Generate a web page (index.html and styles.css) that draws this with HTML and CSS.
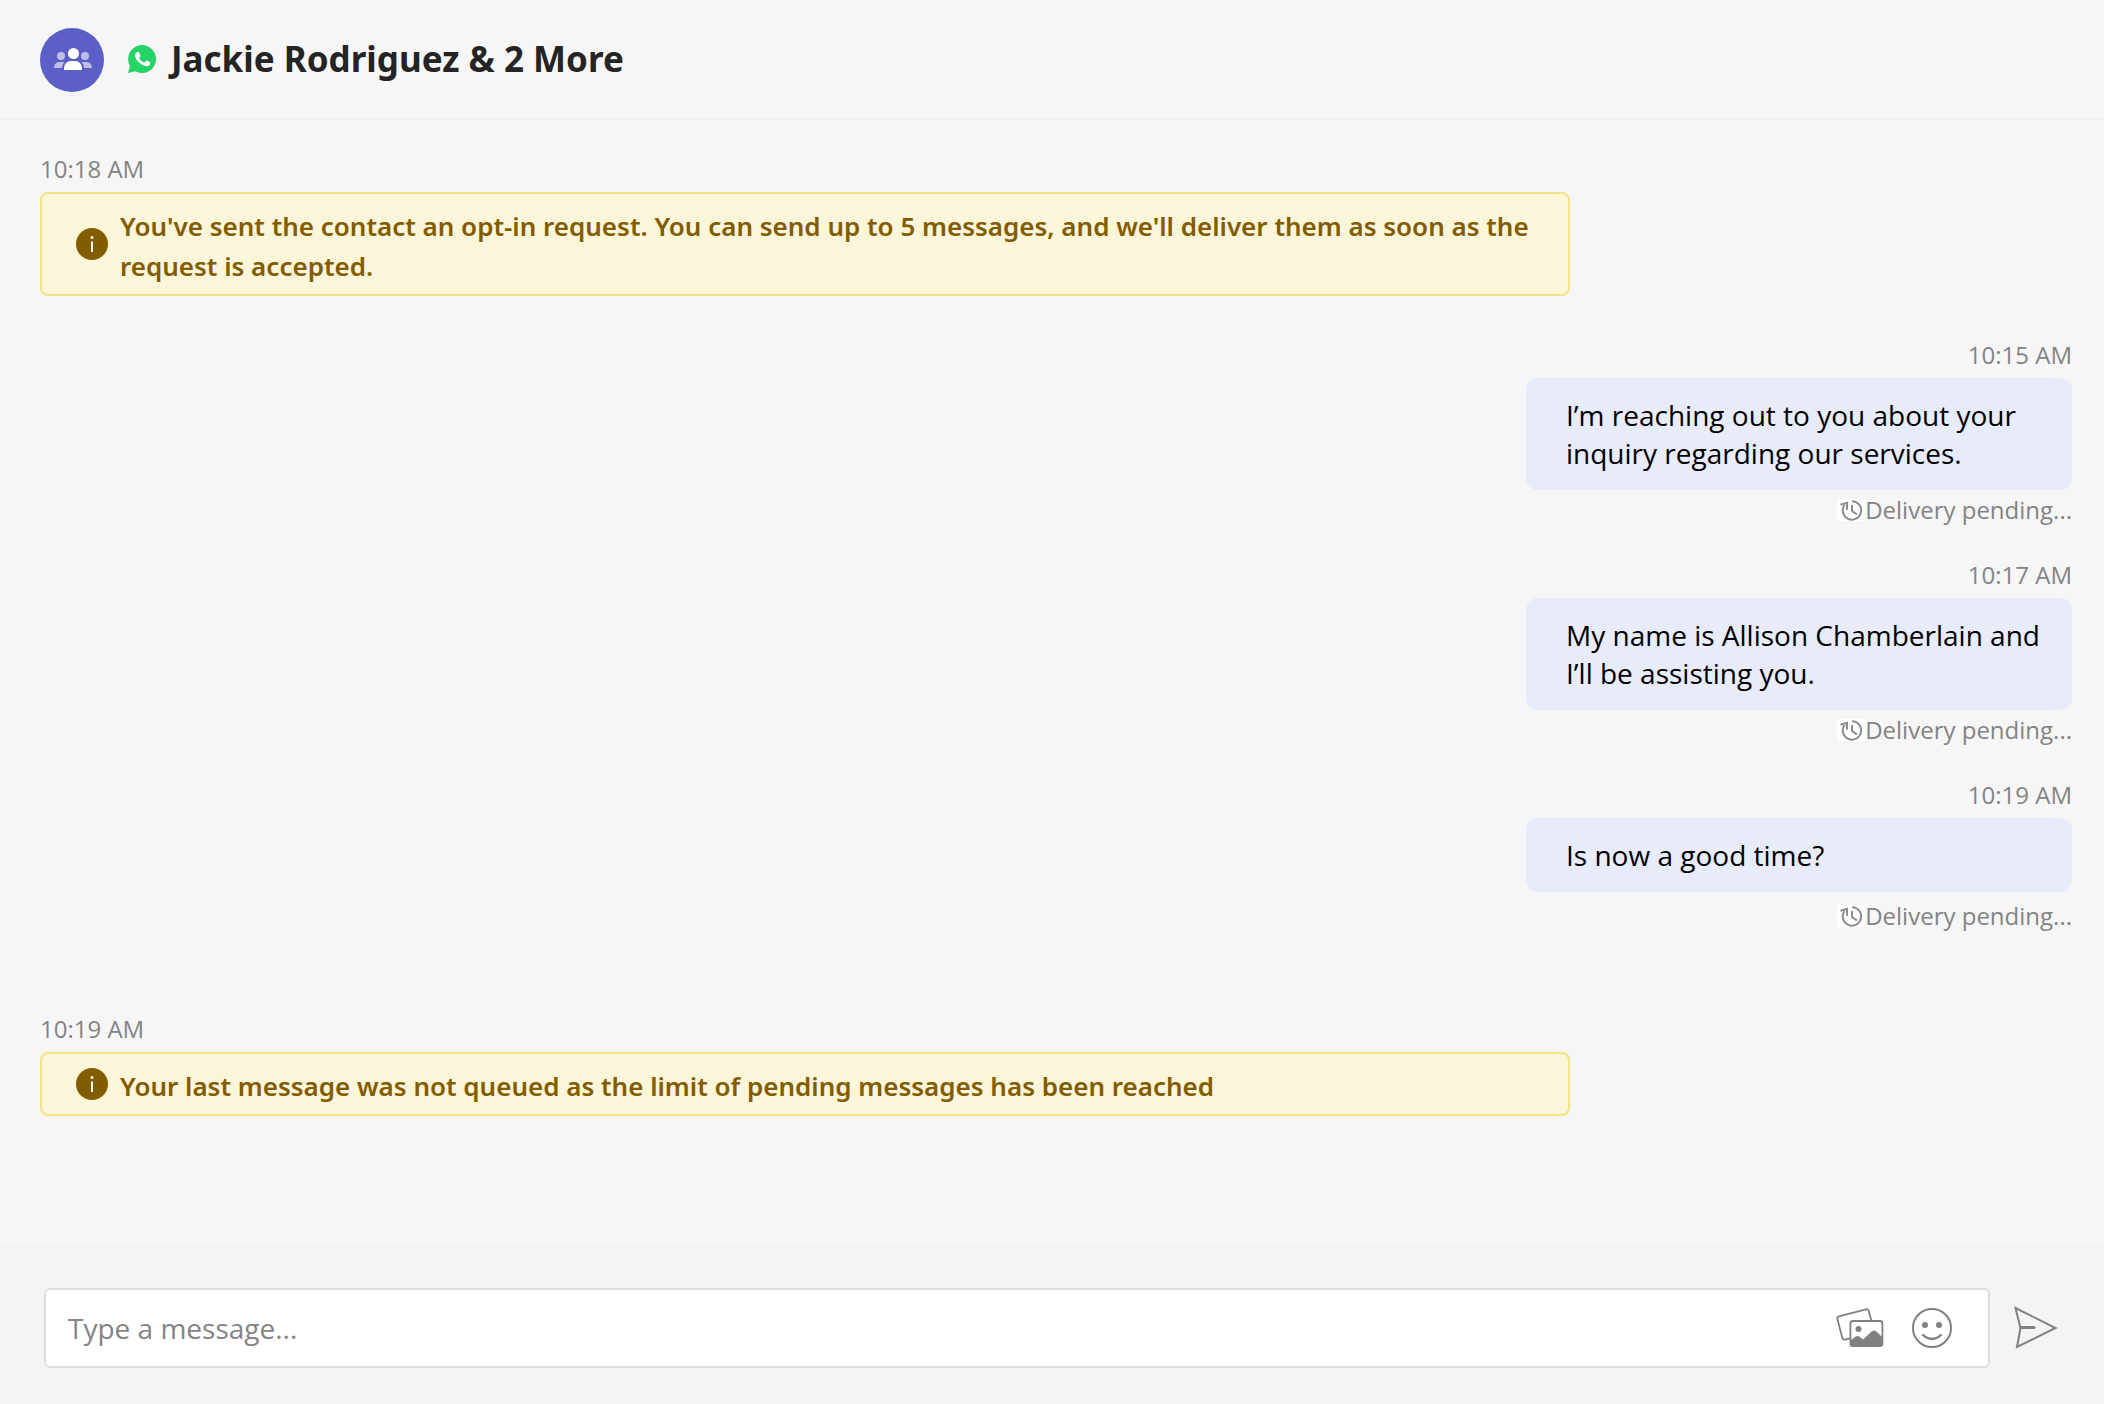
FILE: index.html
```html
<!DOCTYPE html>
<html lang="en">
<head>
<meta charset="utf-8">
<title>Jackie Rodriguez &amp; 2 More</title>
<link rel="stylesheet" href="styles.css">
</head>
<body>
<svg class="defs" aria-hidden="true">
  <symbol id="info" viewBox="0 0 32 32"><circle cx="16" cy="16" r="16" fill="#835c00"/><circle cx="16" cy="9.500" r="1.500" fill="#fff"/><path d="M16 13.500v10.500" stroke="#fff" stroke-width="2"/></symbol>
  <symbol id="pending" viewBox="0 0 28 22"><path fill="#fff" d="M0 0h28v22H0z"/><g fill="none" stroke="#8c8c8c" stroke-width="2"><path d="M15 2.200a9.200 9.200 0 1 1-7.500 3.800"/><path d="M3.500 5.800 10 3.800v7M15 6v6l5 3.500"/></g></symbol>
</svg>
<div class="chat">
  <header class="header">
    <svg class="avatar" viewBox="0 0 64 64" role="img" aria-label="Group">
      <circle cx="32" cy="32" r="32" fill="#5b5fc7"/>
      <g fill="#bdbfe9"><circle cx="21" cy="28" r="4"/><circle cx="45" cy="28" r="4"/><path d="M14 40v-1a6 6 0 0 1 6-5h25a6 6 0 0 1 7 5v1z"/></g>
      <path d="M23 43v-3a8 8 0 0 1 8-8h4a8 8 0 0 1 8 8v3z" fill="#fff" stroke="#5b5fc7" stroke-width="2"/>
      <circle cx="33.500" cy="25.500" r="5.500" fill="#fff"/>
    </svg>
    <div class="heading">
      <svg class="whatsapp" viewBox="0 0 28 28" role="img" aria-label="WhatsApp"><path fill="#25d366" d="M14 0a14 14 0 1 1-6.800 26.200L0 28l2-7A14 14 0 0 1 14 0z"/><path fill="#fff" d="M9 7h1.300q.6 0 .9.700l1.200 3q.2.500-.1.900l-1.200 1.600q1.800 3.200 5.200 4.600l1.700-2q.4-.4.900-.2l2.900 1.500q.5.300.4.900-.3 3.200-3.700 3.200C12.500 20.700 7 14.500 7 10.300Q7 8 9 7z"/></svg>
      <h1 class="title">Jackie Rodriguez &amp; 2 More</h1>
    </div>
  </header>
  <main class="thread">
    <section class="entry">
      <time class="time">10:18 AM</time>
      <div class="notice"><svg class="info"><use href="#info"/></svg><p>You've sent the contact an opt-in request. You can send up to 5 messages, and we'll deliver them as soon as the request is accepted.</p></div>
    </section>
    <section class="sent">
      <article class="message">
        <time class="time">10:15 AM</time>
        <p class="bubble">I’m reaching out to you about your inquiry regarding our services.</p>
        <p class="status"><svg class="pending"><use href="#pending"/></svg>Delivery pending...</p>
      </article>
      <article class="message">
        <time class="time">10:17 AM</time>
        <p class="bubble">My name is Allison Chamberlain and I’ll be assisting you.</p>
        <p class="status"><svg class="pending"><use href="#pending"/></svg>Delivery pending...</p>
      </article>
      <article class="message latest">
        <time class="time">10:19 AM</time>
        <p class="bubble">Is now a good time?</p>
        <p class="status"><svg class="pending"><use href="#pending"/></svg>Delivery pending...</p>
      </article>
    </section>
    <section class="entry">
      <time class="time">10:19 AM</time>
      <div class="notice"><svg class="info"><use href="#info"/></svg><p>Your last message was not queued as the limit of pending messages has been reached</p></div>
    </section>
  </main>
  <form class="composer">
    <div class="field">
      <input class="input" type="text" placeholder="Type a message..." aria-label="Type a message">
      <button class="tool" type="button" aria-label="Add photos">
        <svg width="48" height="40" viewBox="0 0 48 40"><g fill="none" stroke="#808080" stroke-width="1.800"><path d="M14 30.500 9 31.600q-2 .5-2.600-1.500L1.300 11q-.5-2 1.500-2.600L30 1.300q2-.5 2.600 1.500L35.500 13"/><rect x="14.400" y="13" width="32" height="25" rx="2.500"/></g><circle cx="22.500" cy="21" r="3" fill="#808080"/><path d="M14 33l5-4q3-2 5 0l3 2.500 8-7.500q3-3 6 0l6 6v6q0 2.500-3 2.500H17q-3 0-3-2.500z" fill="#808080"/></svg>
      </button>
      <button class="tool" type="button" aria-label="Add emoji">
        <svg width="40" height="40" viewBox="0 0 40 40"><circle cx="20" cy="20" r="19" fill="none" stroke="#808080" stroke-width="2"/><circle cx="13" cy="17" r="3" fill="#808080"/><circle cx="27" cy="17" r="3" fill="#808080"/><path d="M11 27q9 8 18 0" fill="none" stroke="#808080" stroke-width="2.200" stroke-linecap="round"/></svg>
      </button>
    </div>
    <button class="tool" type="submit" aria-label="Send">
      <svg width="44" height="44" viewBox="0 0 44 44"><path d="M1.500 2 41.500 22 3 41 6.500 22z" fill="none" stroke="#808080" stroke-width="2"/><path d="M7 21.500h13" stroke="#808080" stroke-width="3" stroke-linecap="round"/></svg>
    </button>
  </form>
</div>
</body>
</html>
```
FILE: styles.css
```css
* { box-sizing: border-box; }
body { margin: 0; background: #f6f6f6; color: #000; font-family: "Open Sans", sans-serif; }
p, h1 { margin: 0; }
svg { flex: none; display: block; }
.defs { position: absolute; width: 0; height: 0; }
.chat { display: flex; flex-direction: column; min-height: 100vh; }
.header { display: flex; align-items: center; gap: 24px; padding: 28px 40px 26px; border-bottom: 2px solid #efefef; }
.avatar { width: 64px; height: 64px; }
.heading { display: flex; align-items: center; gap: 15px; padding-bottom: 2px; }
.whatsapp { width: 28px; height: 28px; }
.title { color: #242424; font: 700 35px/48px "Noto Sans", sans-serif; }
.thread { flex: 1; padding: 32px 32px 32px 40px; }
.time { display: block; color: #848484; font-size: 24px; line-height: 34px; margin-bottom: 6px; }
.notice { display: flex; align-items: center; gap: 12px; max-width: 1530px; padding: 8px 34px; border: 2px solid #f2e384; border-radius: 8px; background: #fbf5d9; color: #835c00; font: 600 26px/40px "Noto Sans", sans-serif; }
.notice p { padding-top: 4px; }
.info { width: 32px; height: 32px; }
.sent { display: flex; flex-direction: column; align-items: flex-end; gap: 32px; padding: 42px 0 80px; }
.message { width: 546px; }
.message .time { text-align: right; }
.bubble { padding: 18px 24px 18px 40px; border-radius: 12px; background: #e8ebfa; font-size: 28px; line-height: 38px; }
.status { display: flex; align-items: center; justify-content: flex-end; margin-top: 4px; color: #848484; font-size: 24px; line-height: 32px; }
.latest .status { margin-top: 8px; }
.pending { width: 28px; height: 22px; }
.composer { display: flex; align-items: center; gap: 24px; padding: 44px 46px 36px 44px; background: #f4f4f4; }
.field { display: flex; flex: 1; align-items: center; gap: 28px; height: 80px; padding: 0 36px 0 22px; border: 2px solid #ddd; border-radius: 6px; background: #fff; }
.input { flex: 1; min-width: 0; height: 76px; padding: 0; border: 0; outline: 0; background: none; color: #000; font: 28px "Open Sans", sans-serif; }
.input::placeholder { color: #848484; opacity: 1; }
.tool { padding: 0; border: 0; background: none; cursor: pointer; }
```
